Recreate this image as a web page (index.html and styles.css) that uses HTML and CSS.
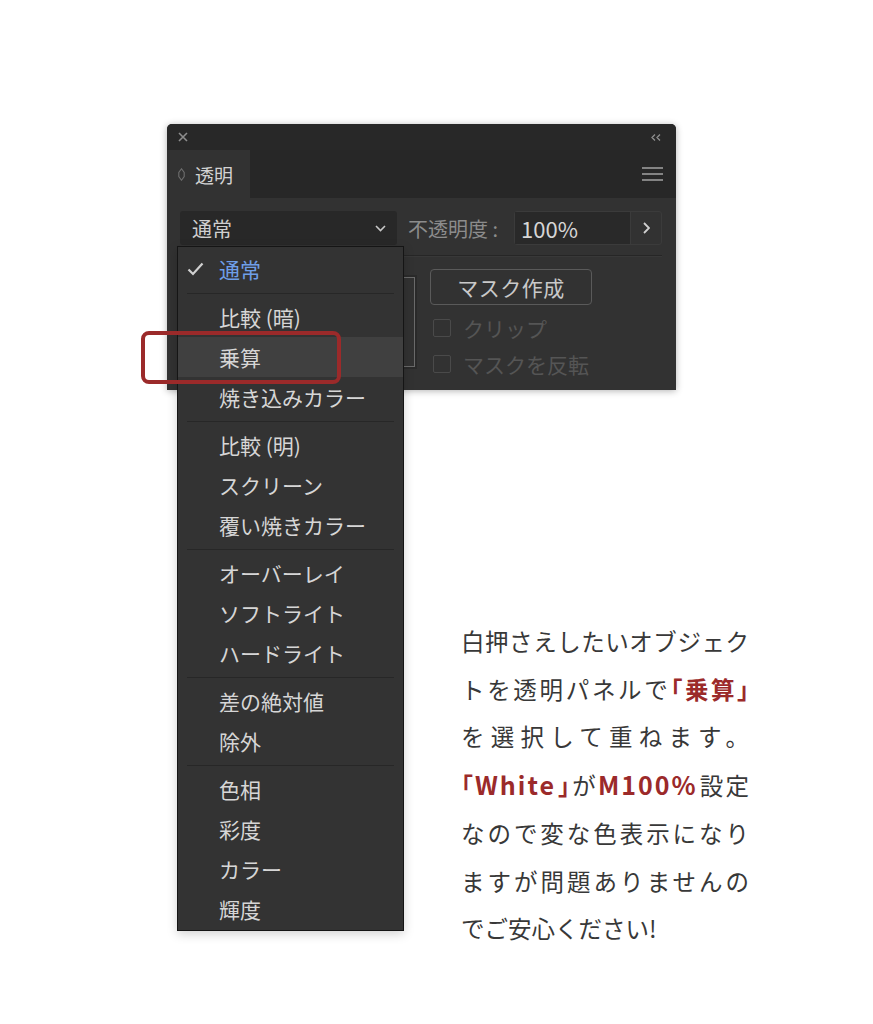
FILE: index.html
```html
<!DOCTYPE html>
<html lang="ja">
  <head>
    <meta charset="UTF-8" />
    <meta name="viewport" content="width=device-width, initial-scale=1.0" />
    <title>透明パネル 乗算</title>
    <link rel="stylesheet" href="styles.css">
  </head>
  <body>
    <main class="page">
      <div class="figure">
        <section class="panel">
          <div class="titlebar">
            <svg class="close" width="10" height="10" viewBox="0 0 10 10">
              <path d="M1 1 L9 9 M9 1 L1 9" />
            </svg>
            <svg class="collapse" width="10" height="7" viewBox="0 0 10 7">
              <path d="M4 0.5 L1 3.5 L4 6.5 M9 0.5 L6 3.5 L9 6.5" />
            </svg>
          </div>

          <div class="tabs">
            <div class="tab">
              <svg class="tab-arrows" width="7" height="13" viewBox="0 0 7 13">
                <path d="M3.5 0.8 L6.2 4.5 L6.2 8.5 L3.5 12.2 L0.8 8.5 L0.8 4.5 Z" />
              </svg>
              <span>透明</span>
            </div>
            <div class="tab-menu">
              <svg width="21" height="14" viewBox="0 0 21 14">
                <path d="M0 1 H21 M0 7 H21 M0 13 H21" />
              </svg>
            </div>
          </div>

          <div class="panel-body">
            <div class="controls">
              <div class="blend-select">
                <span>通常</span>
                <svg class="chevron" width="11" height="7" viewBox="0 0 11 7">
                  <path d="M1 1 L5.5 5.5 L10 1" />
                </svg>

                <ul class="blend-menu">
                  <li class="checked">
                    <svg class="check" width="17" height="14" viewBox="0 0 17 14">
                      <path d="M1.5 7.5 L6 12 L15.5 1.5" />
                    </svg>
                    通常
                  </li>
                  <li class="sep"></li>
                  <li>比較 (暗)</li>
                  <li class="hover">乗算<span class="annotation"></span></li>
                  <li>焼き込みカラー</li>
                  <li class="sep"></li>
                  <li>比較 (明)</li>
                  <li>スクリーン</li>
                  <li>覆い焼きカラー</li>
                  <li class="sep"></li>
                  <li>オーバーレイ</li>
                  <li>ソフトライト</li>
                  <li>ハードライト</li>
                  <li class="sep"></li>
                  <li>差の絶対値</li>
                  <li>除外</li>
                  <li class="sep"></li>
                  <li>色相</li>
                  <li>彩度</li>
                  <li>カラー</li>
                  <li>輝度</li>
                </ul>
              </div>
              <span class="opacity-label">不透明度 :</span>
              <div class="opacity-field">
                <span class="opacity-value">100%</span>
                <span class="opacity-step">
                  <svg width="7" height="12" viewBox="0 0 7 12">
                    <path d="M1 1 L6 6 L1 11" />
                  </svg>
                </span>
              </div>
            </div>

            <div class="divider"></div>

            <div class="mask-row">
              <div class="thumbs">
                <div class="thumb"></div>
              </div>
              <div class="mask-controls">
                <div class="mask-button">マスク作成</div>
                <label class="check-row"><span class="box"></span>クリップ</label>
                <label class="check-row"><span class="box"></span>マスクを反転</label>
              </div>
            </div>
          </div>
        </section>

        <p class="note">
          <span class="line">白押さえしたいオブジェク</span>
          <span class="line">トを透明パネルで<em>「乗算」</em></span>
          <span class="line">を選択して重ねます。</span>
          <span class="line"><em>「<span class="latin">White</span>」</em>が<em class="latin">M100%</em>設定</span>
          <span class="line">なので変な色表示になり</span>
          <span class="line">ますが問題ありませんの</span>
          <span class="line">でご安心ください!</span>
        </p>
      </div>
    </main>
  </body>
</html>
```

FILE: styles.css
```css
body {
  margin: 0;
  background-color: #ffffff;
  font-family: "Noto Sans CJK JP", "Noto Sans", sans-serif;
}
.page {
  padding: 124px 0 40px 167px;
}
.figure {
  width: 582px;
}

/* panel */
.panel {
  width: 509px;
  height: 266px;
  display: flex;
  flex-direction: column;
  background-color: #323232;
  border-radius: 5px 5px 0 0;
  box-shadow: 0 1px 7px rgba(0, 0, 0, 0.3);
}
.titlebar {
  height: 26px;
  display: flex;
  align-items: center;
  justify-content: space-between;
  padding: 0 15px 0 11px;
  background-color: #282828;
  border-radius: 5px 5px 0 0;
}
.titlebar svg path {
  fill: none;
  stroke: #8e8e8e;
  stroke-width: 1.6;
}
.titlebar .collapse path {
  stroke-width: 1.3;
}
.tabs {
  height: 48px;
  display: flex;
  justify-content: space-between;
  background-color: #272727;
}
.tab {
  width: 83px;
  box-sizing: border-box;
  display: flex;
  align-items: center;
  gap: 10px;
  padding-left: 11px;
  background-color: #323232;
  color: #d2d2d2;
  font-size: 19px;
}
.tab-arrows path {
  fill: none;
  stroke: #6e6e6e;
  stroke-width: 1.1;
}
.tab-menu {
  display: flex;
  align-items: center;
  padding-right: 13px;
}
.tab-menu path {
  stroke: #a2a2a2;
  stroke-width: 1.6;
}
.panel-body {
  flex: 1;
  padding: 13px 14px 0 13px;
}

/* top controls */
.controls {
  display: flex;
  align-items: center;
  height: 34px;
}
.blend-select {
  position: relative;
  width: 217px;
  height: 34px;
  box-sizing: border-box;
  display: flex;
  align-items: center;
  justify-content: space-between;
  padding: 0 11px 0 12px;
  background-color: #282828;
  border-radius: 3px;
  color: #cfcfcf;
  font-size: 20px;
}
.chevron path {
  fill: none;
  stroke: #c8c8c8;
  stroke-width: 1.6;
}
.opacity-label {
  flex: 1;
  margin-left: 11px;
  color: #8c8c8c;
  font-size: 20px;
  white-space: nowrap;
}
.opacity-field {
  width: 148px;
  height: 34px;
  box-sizing: border-box;
  display: flex;
  border: 1px solid #3b3b3b;
  border-radius: 3px;
}
.opacity-value {
  flex: 1;
  padding-left: 6px;
  background-color: #292929;
  color: #d6d6d6;
  font-size: 22px;
  line-height: 32px;
}
.opacity-step {
  width: 30px;
  display: flex;
  align-items: center;
  justify-content: center;
  border-left: 1px solid #3b3b3b;
}
.opacity-step path {
  fill: none;
  stroke: #d0d0d0;
  stroke-width: 1.8;
}
.divider {
  margin-top: 10px;
  height: 1px;
  background-color: #262626;
  border-bottom: 1px solid #383838;
}

/* mask area */
.mask-row {
  display: flex;
  padding-top: 12px;
}
.thumbs {
  width: 235px;
  display: flex;
  justify-content: flex-end;
  padding-top: 8px;
}
.thumb {
  width: 90px;
  height: 90px;
  box-sizing: border-box;
  border: 1px solid #6a6a6a;
  box-shadow: 0 0 0 2px #2a2a2a;
}
.mask-controls {
  margin-left: 15px;
}
.mask-button {
  width: 162px;
  height: 36px;
  box-sizing: border-box;
  display: flex;
  align-items: center;
  justify-content: center;
  border: 1px solid #5a5a5a;
  border-radius: 4px;
  color: #c9c9c9;
  font-size: 21px;
  letter-spacing: 0.5px;
}
.check-row {
  height: 36px;
  display: flex;
  align-items: center;
  gap: 12px;
  padding-left: 3px;
  color: #555555;
  font-size: 21px;
  white-space: nowrap;
}
.check-row:first-of-type {
  margin-top: 5px;
}
.check-row .box {
  width: 18px;
  height: 18px;
  box-sizing: border-box;
  border: 1px solid #4a4a4a;
  border-radius: 2px;
}

/* dropdown */
.blend-menu {
  position: absolute;
  left: -3px;
  top: 35px;
  z-index: 2;
  width: 227px;
  box-sizing: border-box;
  margin: 0;
  padding: 2px 0 1px;
  list-style: none;
  background-color: #333333;
  border: 1px solid #151515;
  box-shadow: 0 3px 10px rgba(0, 0, 0, 0.18);
}
.blend-menu li {
  position: relative;
  height: 40px;
  display: flex;
  align-items: center;
  padding-left: 41px;
  color: #d6d6d6;
  font-size: 21px;
  white-space: nowrap;
}
.blend-menu li.checked {
  color: #6f9fe8;
}
.blend-menu .check {
  position: absolute;
  left: 9px;
  top: 13px;
}
.blend-menu .check path {
  fill: none;
  stroke: #d0d0d0;
  stroke-width: 2.2;
}
.blend-menu li.sep {
  height: 8px;
  padding: 0;
}
.blend-menu li.sep::after {
  content: "";
  position: absolute;
  left: 9px;
  right: 9px;
  top: 4px;
  height: 1px;
  background-color: #272727;
}
.blend-menu li.hover {
  background-color: #404040;
}
.annotation {
  position: absolute;
  left: -37px;
  top: -6px;
  width: 200px;
  height: 53px;
  box-sizing: border-box;
  border: 4px solid #9b2a2a;
  border-radius: 8px;
}

/* caption */
.note {
  width: 288px;
  margin: 228px 0 0 294px;
  color: #383838;
  font-size: 23.5px;
  line-height: 47.7px;
}
.note .line {
  display: block;
  text-align: justify;
  text-align-last: justify;
}
.note .line:last-child {
  text-align-last: left;
}
.note em {
  font-style: normal;
  font-weight: 700;
  color: #9b2a2a;
  font-feature-settings: "palt";
}
.note .latin {
  font-size: 25px;
  letter-spacing: 2px;
}
```
